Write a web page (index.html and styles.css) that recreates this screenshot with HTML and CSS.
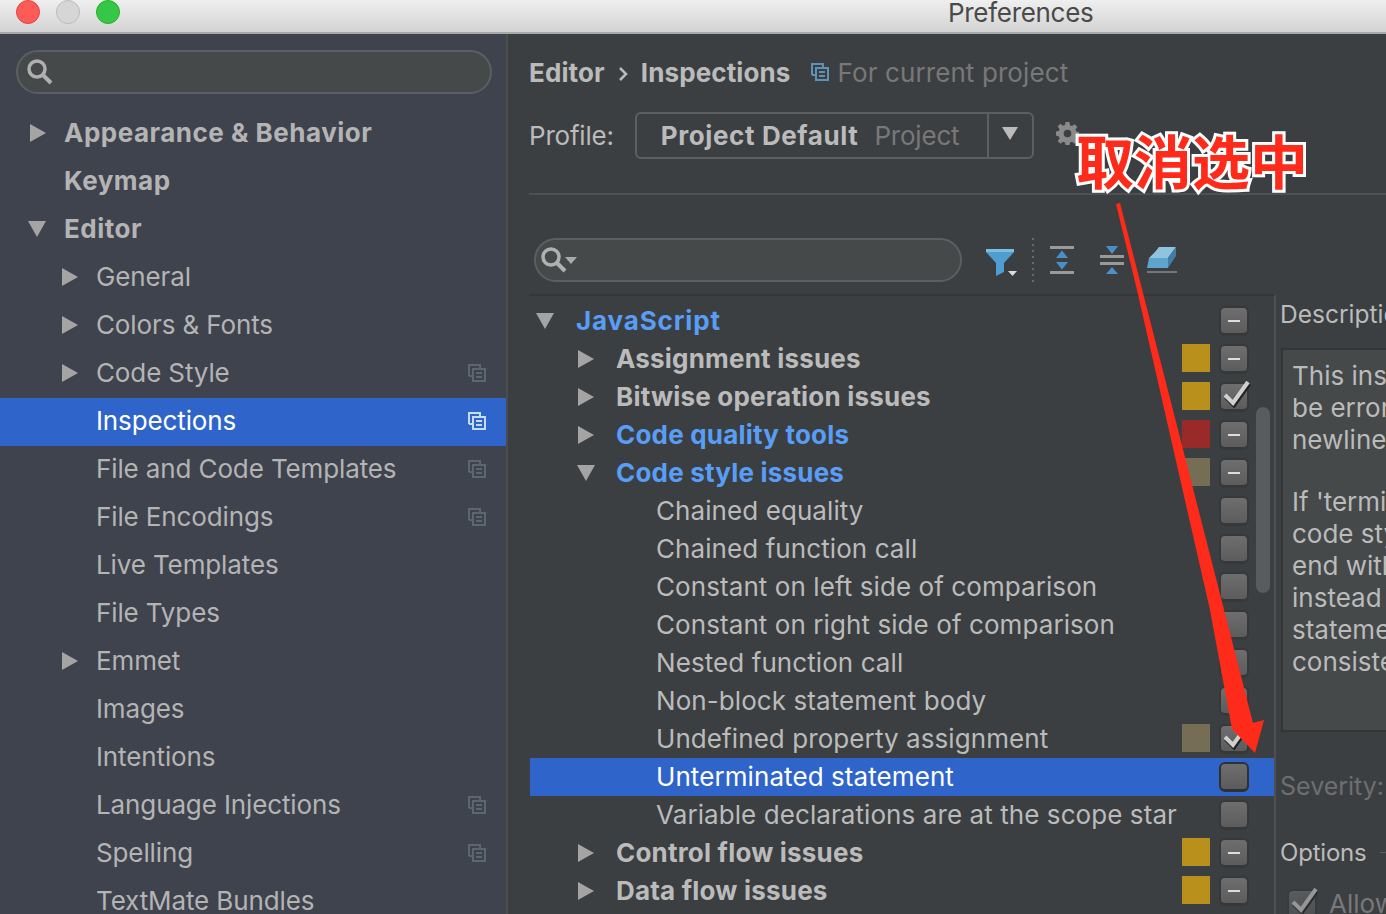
FILE: index.html
```html
<!DOCTYPE html>
<html lang="zh-CN">
<head>
	<meta charset="UTF-8">
	<title>Preferences</title>
	<link rel="stylesheet" href="styles.css">
</head>
<body>
	<svg class="defs">
		<symbol id="copy" viewBox="0 0 18 18">
			<path class="back" d="M1 12V1h11v3" fill="none" stroke-width="2"/>
			<path class="back" d="M1 12h3" fill="none" stroke-width="2"/>
			<rect class="front" x="5" y="5" width="12" height="12" fill="none" stroke-width="2"/>
			<path class="front" d="M8 9h6M8 13h6" fill="none" stroke-width="2"/>
		</symbol>
		<symbol id="check" viewBox="0 0 30 30">
			<path d="M3 17l8 8L26 4" fill="none" stroke="#222" stroke-width="4.500"/>
			<path d="M2 15l8 8L25 2" fill="none" stroke="#d0d0d0" stroke-width="4"/>
		</symbol>
		<symbol id="search" viewBox="0 0 26 26">
			<circle cx="10" cy="10" r="8" fill="none" stroke="#b0b0b0" stroke-width="3.500"/>
			<path d="M15 15l9 9" stroke="#b0b0b0" stroke-width="4"/>
		</symbol>
	</svg>

	<div class="titlebar">
		<span class="light red"></span>
		<span class="light grey"></span>
		<span class="light green"></span>
		<span class="title">Preferences</span>
	</div>

	<div class="window">
		<div class="sidebar">
			<div class="search side-search"><svg class="search-icon"><use href="#search"/></svg></div>
			<ul class="nav">
				<li class="bold"><i class="tri"></i>Appearance &amp; Behavior</li>
				<li class="bold"><i class="tri none"></i>Keymap</li>
				<li class="bold"><i class="tri open"></i>Editor</li>
				<li class="sub"><i class="tri"></i>General</li>
				<li class="sub"><i class="tri"></i>Colors &amp; Fonts</li>
				<li class="sub"><i class="tri"></i>Code Style<svg class="copy"><use href="#copy"/></svg></li>
				<li class="sub on"><i class="tri none"></i>Inspections<svg class="copy"><use href="#copy"/></svg></li>
				<li class="sub"><i class="tri none"></i>File and Code Templates<svg class="copy"><use href="#copy"/></svg></li>
				<li class="sub"><i class="tri none"></i>File Encodings<svg class="copy"><use href="#copy"/></svg></li>
				<li class="sub"><i class="tri none"></i>Live Templates</li>
				<li class="sub"><i class="tri none"></i>File Types</li>
				<li class="sub"><i class="tri"></i>Emmet</li>
				<li class="sub"><i class="tri none"></i>Images</li>
				<li class="sub"><i class="tri none"></i>Intentions</li>
				<li class="sub"><i class="tri none"></i>Language Injections<svg class="copy"><use href="#copy"/></svg></li>
				<li class="sub"><i class="tri none"></i>Spelling<svg class="copy"><use href="#copy"/></svg></li>
				<li class="sub"><i class="tri none"></i>TextMate Bundles</li>
			</ul>
		</div>

		<div class="main">
			<div class="crumbs">
				<b>Editor</b>
				<svg class="crumb-sep" viewBox="0 0 10 16"><path d="M2 2l6 6-6 6" fill="none" stroke="#bbb" stroke-width="2.500"/></svg>
				<b>Inspections</b>
				<svg class="copy crumb-copy"><use href="#copy"/></svg>
				<span class="muted">For current project</span>
			</div>

			<div class="profile">
				<span class="profile-label">Profile:</span>
				<div class="combo">
					<div class="combo-text"><b>Project Default</b><span class="muted">Project</span></div>
					<div class="combo-btn"><i class="arrow"></i></div>
				</div>
				<svg class="gear" viewBox="0 0 24 24">
					<path fill="#8a8a8a" fill-rule="evenodd" d="M10 0h4l.6 3.4 2 .8L19.500 2.300l2.800 2.800-2 2.800.8 2 3.400.6v4l-3.400.6-.8 2 2 2.800-2.800 2.800-2.800-2-2 .8-.7 3.400h-4l-.6-3.400-2-.8-2.800 2-2.800-2.800 2-2.800-.8-2L-.500 14v-4l3.400-.6.800-2-2-2.800 2.800-2.800 2.800 2 2-.8zM12 8a4 4 0 100 8 4 4 0 000-8z"/>
				</svg>
			</div>

			<div class="rule"></div>

			<div class="toolbar">
				<div class="search tree-search"><svg class="search-icon"><use href="#search"/></svg><i class="mini-arrow"></i></div>
				<svg class="tool filter" viewBox="0 0 32 30">
					<path fill="#4f9ed2" d="M1 1h28v3L19 15v9l-8 4V15L1 4z"/>
					<path fill="#7cbde6" d="M1 1h28v3H1z"/>
					<path fill="#ddd" d="M23 23h9l-4.500 5z"/>
				</svg>
				<i class="dots"></i>
				<svg class="tool expand" viewBox="0 0 24 28">
					<path fill="#999" d="M0 0h24v3H0zM0 25h24v3H0z"/>
					<path fill="#4a90c8" d="M12 4.500l6 7.500H6zM6 16h12l-6 7.500z"/>
				</svg>
				<svg class="tool collapse" viewBox="0 0 24 28">
					<path fill="#999" d="M0 9h24v3H0zM0 16h24v3H0z"/>
					<path fill="#4a90c8" d="M6 0h12l-6 8zM12 21l6 7H6z"/>
				</svg>
				<svg class="tool eraser" viewBox="0 0 30 28">
					<path fill="#8fc3e0" d="M8 6l4-5h17l-8 11H2z"/>
					<path fill="#3f7ea6" d="M21 12l8-11v9l-8 12z"/>
					<path fill="#5fa4cc" d="M2 12h19v10H0z"/>
					<path fill="#777" d="M0 25h30v2H0z"/>
				</svg>
			</div>

			<div class="lower">
				<div class="tree">
					<div class="row"><i class="tri open"></i><span class="name link">JavaScript</span><i class="cb dash"></i></div>
					<div class="row lvl2"><i class="tri"></i><span class="name strong">Assignment issues</span><i class="swatch warn"></i><i class="cb dash"></i></div>
					<div class="row lvl2"><i class="tri"></i><span class="name strong">Bitwise operation issues</span><i class="swatch warn"></i><i class="cb"><svg class="tick"><use href="#check"/></svg></i></div>
					<div class="row lvl2"><i class="tri"></i><span class="name link">Code quality tools</span><i class="swatch err"></i><i class="cb dash"></i></div>
					<div class="row lvl2"><i class="tri open"></i><span class="name link">Code style issues</span><i class="swatch weak"></i><i class="cb dash"></i></div>
					<div class="row lvl3"><span class="name">Chained equality</span><i class="cb"></i></div>
					<div class="row lvl3"><span class="name">Chained function call</span><i class="cb"></i></div>
					<div class="row lvl3"><span class="name">Constant on left side of comparison</span><i class="cb"></i></div>
					<div class="row lvl3"><span class="name">Constant on right side of comparison</span><i class="cb"></i></div>
					<div class="row lvl3"><span class="name">Nested function call</span><i class="cb"></i></div>
					<div class="row lvl3"><span class="name">Non-block statement body</span><i class="cb"></i></div>
					<div class="row lvl3"><span class="name">Undefined property assignment</span><i class="swatch weak"></i><i class="cb"><svg class="tick"><use href="#check"/></svg></i></div>
					<div class="row lvl3 on"><span class="name">Unterminated statement</span><i class="cb"></i></div>
					<div class="row lvl3"><span class="name">Variable declarations are at the scope star</span><i class="cb"></i></div>
					<div class="row lvl2"><i class="tri"></i><span class="name strong">Control flow issues</span><i class="swatch warn"></i><i class="cb dash"></i></div>
					<div class="row lvl2"><i class="tri"></i><span class="name strong">Data flow issues</span><i class="swatch warn"></i><i class="cb dash"></i></div>
					<div class="scrollbar"></div>
				</div>

				<div class="details">
					<div class="desc-title">Description</div>
					<div class="desc-box">
						<p>This inspection<br>be errors<br>newline</p>
						<p>If 'terminating<br>code style<br>end with<br>instead<br>statements<br>consistent</p>
					</div>
					<div class="severity">Severity:</div>
					<div class="options">Options<i class="opt-line"></i></div>
					<div class="allow"><i class="cb off"><svg class="tick"><use href="#check"/></svg></i>Allow</div>
				</div>
			</div>
		</div>
	</div>

	<!-- annotation on top of the screenshot -->
	<svg class="arrow-note" viewBox="0 0 1386 914">
		<polygon fill="#fe2a1a" points="1116,204 1120,203 1253,723 1264,720 1255,753 1232,729 1210,610 1137,290"/>
	</svg>
	<div class="note">取消选中</div>
</body>
</html>
```

FILE: styles.css
```css
*{
	margin: 0;
	padding: 0;
	box-sizing: border-box;
}
html,body{
	height: 914px;
	overflow: hidden;
}
body{
	font-family: Inter, "Noto Sans CJK SC", sans-serif;
	font-size: 26px;
	color: #bbb;
	background: #3c3f41;
}
ul{
	list-style: none;
}
i{
	display: block;
}
.defs{
	display: none;
}

/* title bar */
.titlebar{
	height: 34px;
	display: flex;
	align-items: flex-start;
	padding-left: 16px;
	gap: 16px;
	background: linear-gradient(#efefef, #d3d3d3);
	border-bottom: 2px solid #a9a9a9;
}
.light{
	width: 24px;
	height: 24px;
	border-radius: 50%;
}
.red{
	background: #fc5b57;
	border: 1px solid #e2463f;
}
.grey{
	background: #d6d6d6;
	border: 1px solid #bbb;
}
.green{
	background: #34c748;
	border: 1px solid #2dac2f;
}
.title{
	margin-left: 812px;
	line-height: 26px;
	letter-spacing: -.3px;
	color: #4a4a4a;
}

.window{
	display: flex;
	height: 880px;
}

/* left side */
.sidebar{
	width: 508px;
	flex: none;
	background: #3f434e;
	border-right: 2px solid #4b4c4e;
	padding-top: 16px;
}
.search{
	background: #45494a;
	border: 2px solid #5c5f62;
	display: flex;
	align-items: center;
}
.side-search{
	width: 476px;
	height: 44px;
	margin-left: 16px;
	border-radius: 22px;
	padding-left: 9px;
}
.search-icon{
	width: 26px;
	height: 26px;
}
.nav{
	margin-top: 16px;
}
.nav li{
	height: 48px;
	display: flex;
	align-items: center;
	padding: 0 0 4px 30px;
	letter-spacing: -.12px;
	color: #b4b4b4;
}
.nav .bold{
	font-weight: 700;
	letter-spacing: .5px;
}
.nav .sub{
	padding-left: 62px;
}
.nav .on{
	background: #2f65ca;
	color: #fff;
}
.tri{
	width: 0;
	height: 0;
	flex: none;
	border-left: 16px solid #a4a4a4;
	border-top: 9px solid transparent;
	border-bottom: 9px solid transparent;
}
.nav .tri{
	margin: 2px 18px 0 0;
}
.tri.none{
	border-color: transparent;
}
.tri.open{
	border-left: 9px solid transparent;
	border-right: 9px solid transparent;
	border-top: 16px solid #a4a4a4;
	border-bottom: 0;
}
.nav .tri.open{
	margin: 2px 18px 0 -2px;
}
.copy{
	width: 18px;
	height: 18px;
	margin: 2px 20px 0 auto;
}
.copy .back,.copy{
	stroke: #5c6670;
}
.copy .front{
	stroke: #6e7074;
}
.nav .on .copy{
	stroke: #c5dcf0;
}

/* right side */
.main{
	flex: 1;
	padding: 0 0 0 21px;
	overflow: hidden;
}
.crumbs{
	height: 78px;
	display: flex;
	align-items: center;
	padding-bottom: 2px;
	letter-spacing: .1px;
}
.crumbs b{
	letter-spacing: .12px;
}
.crumb-sep{
	width: 10px;
	height: 16px;
	margin: 4px 13px 0 13px;
}
.crumb-copy{
	stroke: #5e92b8;
	margin: 0 9px 0 20px;
}
.muted{
	color: #787878;
}
.profile{
	height: 46px;
	display: flex;
	align-items: center;
}
.profile-label{
	letter-spacing: -.2px;
}
.combo{
	width: 399px;
	height: 47px;
	margin-left: 21px;
	border: 2px solid #5c5f62;
	border-radius: 6px;
	display: flex;
}
.combo-text{
	flex: 1;
	display: flex;
	align-items: center;
	gap: 16px;
	padding-left: 24px;
	border-right: 2px solid #5c5f62;
}
.combo-text b{
	letter-spacing: .6px;
}
.combo-text .muted{
	letter-spacing: -.2px;
}
.combo-btn{
	width: 43px;
	display: flex;
	align-items: center;
	justify-content: center;
}
.arrow{
	border-left: 8px solid transparent;
	border-right: 8px solid transparent;
	border-top: 13px solid #bbb;
	margin-bottom: 4px;
}
.gear{
	width: 23px;
	height: 23px;
	margin: 10px 0 0 22px;
	align-self: flex-start;
}
.rule{
	height: 2px;
	margin-top: 35px;
	background: #4e5052;
}
.toolbar{
	height: 44px;
	margin-top: 43px;
	display: flex;
	align-items: center;
}
.tree-search{
	width: 428px;
	height: 44px;
	margin-left: 5px;
	border-radius: 22px;
	padding-left: 5px;
}
.mini-arrow{
	border-left: 6px solid transparent;
	border-right: 6px solid transparent;
	border-top: 7px solid #aaa;
	margin-left: -2px;
}
.tool{
	flex: none;
}
.filter{
	width: 32px;
	height: 30px;
	margin: 6px 0 0 23px;
}
.dots{
	width: 2px;
	height: 44px;
	margin-left: 15px;
	background: repeating-linear-gradient(#6a6a6a 0 2px, transparent 2px 6px);
}
.expand{
	width: 24px;
	height: 28px;
	margin-left: 16px;
}
.collapse{
	width: 24px;
	height: 28px;
	margin-left: 26px;
}
.eraser{
	width: 30px;
	height: 28px;
	margin-left: 23px;
}
.lower{
	display: flex;
	margin-top: 12px;
}
.tree{
	position: relative;
	width: 747px;
	flex: none;
	height: 640px;
	border-top: 2px solid #343638;
	border-right: 2px solid #4e5052;
	padding: 6px 0 0 1px;
}
.row{
	height: 38px;
	display: flex;
	align-items: center;
	padding: 0 25px 0 6px;
}
.row .tri{
	margin-right: 22px;
}
.lvl2{
	padding-left: 48px;
}
.lvl2 .tri.open{
	margin: 0 21px 0 -1px;
}
.lvl3{
	padding-left: 126px;
}
.row.on{
	background: #2f65ca;
	color: #fff;
}
.name{
	flex: 1;
	padding-bottom: 2px;
	letter-spacing: .08px;
	white-space: nowrap;
}
.link{
	font-weight: 700;
	letter-spacing: .2px;
	color: #589df6;
}
.row:first-child .link{
	letter-spacing: .85px;
}
.strong{
	font-weight: 700;
	letter-spacing: .2px;
}
.swatch{
	width: 28px;
	height: 28px;
	margin: 0 9px 2px 0;
}
.warn{
	background: #b9901b;
}
.err{
	background: #9a2a2a;
}
.weak{
	background: #756e55;
}
.cb{
	position: relative;
	width: 30px;
	height: 30px;
	flex: none;
	border: 2px solid #37383a;
	border-bottom-width: 3px;
	border-radius: 6px;
	background: linear-gradient(#6e6e6e, #5c5c5c);
}
.row.on .cb{
	border-color: #2e3134;
}
.dash::after{
	content: "";
	position: absolute;
	left: 7px;
	right: 7px;
	top: 12px;
	height: 2px;
	background: #ddd;
}
.tick{
	position: absolute;
	left: 2px;
	top: -4px;
	width: 30px;
	height: 30px;
}
.scrollbar{
	position: absolute;
	left: 727px;
	top: 111px;
	width: 14px;
	height: 186px;
	border-radius: 7px;
	background: #595b5d;
}
.details{
	width: 300px;
	flex: none;
	padding: 1px 0 0 5px;
	white-space: nowrap;
}
.desc-title{
	height: 38px;
	line-height: 38px;
	margin-left: -1px;
	font-size: 24.500px;
}
.desc-box{
	height: 384px;
	margin-top: 15px;
	padding: 10px 0 0 9px;
	background: #45494a;
	border: 2px solid #333537;
	line-height: 32px;
}
.desc-box p+p{
	margin-top: 30px;
}
.severity{
	margin: 39px 0 0 -1px;
	font-size: 25px;
	color: #6e6e6e;
}
.options{
	margin: 37px 0 0 -1px;
	display: flex;
	align-items: center;
	gap: 13px;
	font-size: 24px;
	letter-spacing: -.2px;
}
.opt-line{
	width: 20px;
	height: 1px;
	background: #5c5f62;
}
.allow{
	margin-top: 21px;
	padding-left: 6px;
	display: flex;
	align-items: center;
	gap: 12px;
	color: #787878;
}
.cb.off{
	opacity: .6;
}

/* red note */
.arrow-note{
	position: absolute;
	left: 0;
	top: 0;
	width: 1386px;
	height: 914px;
}
.note{
	position: absolute;
	left: 1076px;
	top: 123px;
	font-size: 58px;
	line-height: 80px;
	font-weight: 700;
	white-space: nowrap;
	color: #fe2a1a;
	-webkit-text-stroke: 6px #fff;
	paint-order: stroke fill;
}
```
